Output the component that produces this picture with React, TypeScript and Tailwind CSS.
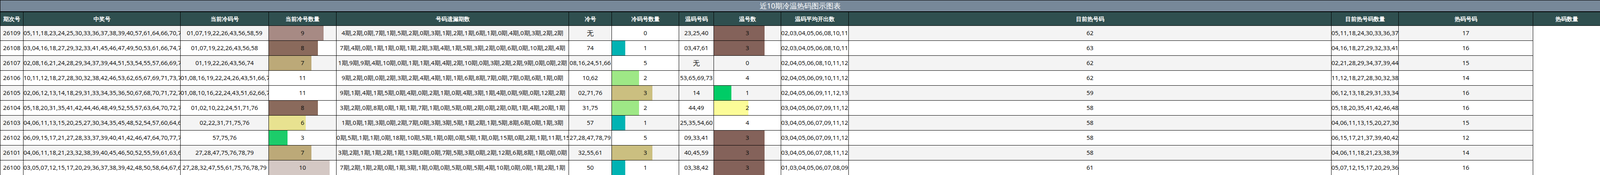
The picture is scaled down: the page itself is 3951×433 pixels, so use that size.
import React from "react";

type Bar = { w: number; c: string } | null;

const cols = [
  { t: "期次号", w: 57 },
  { t: "中奖号", w: 388 },
  { t: "当前冷码号", w: 218 },
  { t: "当前冷号数量", w: 167 },
  { t: "号码遗漏期数", w: 574 },
  { t: "冷号", w: 106 },
  { t: "冷码号数量", w: 166 },
  { t: "温码号码", w: 86 },
  { t: "温号数", w: 166 },
  { t: "温码平均开出数", w: 167 },
  { t: "目前热号码", w: 1192 },
  { t: "目前热号码数量", w: 166 },
  { t: "热码号码", w: 332 },
  { t: "热码数量", w: 166 },
];

const rows = [
  ["26109", "05,11,18,23,24,25,30,33,36,37,38,39,40,57,61,64,66,70,71,76", "01,07,19,22,26,43,56,58,59", "9", "4期,2期,0期,7期,1期,5期,2期,0期,3期,1期,2期,1期,6期,1期,0期,4期,0期,3期,2期,2期", "无", "0", "23,25,40", "3", "02,03,04,05,06,08,10,11,12,13,14,16,18,21,23,24,25,27,28,29,30,31,32,33,34,35,36,37,38,39,40,41,42,44,45,46,47,49,50,51,53,54,55,57,61,62,64,65,66,67,68,69,70,71,72,73,74,75,76,77,79,80", "62", "05,11,18,24,30,33,36,37,38,39,57,61,64,66,70,71,76", "17"],
  ["26108", "03,04,16,18,27,29,32,33,41,45,46,47,49,50,53,61,66,74,77,80", "01,07,19,22,26,43,56,58", "8", "7期,4期,0期,1期,1期,0期,1期,2期,3期,4期,1期,5期,3期,2期,0期,6期,0期,10期,2期,4期", "74", "1", "03,47,61", "3", "02,03,04,05,06,08,10,11,12,13,14,16,18,20,21,24,27,28,29,30,31,32,33,34,35,36,37,38,39,41,42,44,45,46,47,48,49,50,51,52,53,54,55,57,61,62,63,64,65,66,67,68,69,70,71,72,73,74,75,76,77,79,80", "63", "04,16,18,27,29,32,33,41,45,46,49,50,53,66,77,80", "16"],
  ["26107", "02,08,16,21,24,28,29,34,37,39,44,51,53,54,55,57,66,69,75,79", "01,19,22,26,43,56,74", "7", "1期,9期,9期,4期,10期,0期,1期,1期,4期,4期,2期,10期,0期,3期,2期,2期,9期,0期,0期,2期", "08,16,24,51,66", "5", "无", "0", "02,04,05,06,08,10,11,12,13,14,15,16,18,20,21,24,25,27,28,29,30,31,32,33,34,35,36,37,38,39,41,42,44,45,46,48,49,50,51,52,53,54,55,57,60,62,63,64,65,66,67,68,69,70,71,72,73,75,76,77,79,80", "62", "02,21,28,29,34,37,39,44,53,54,55,57,69,75,79", "15"],
  ["26106", "10,11,12,18,27,28,30,32,38,42,46,53,62,65,67,69,71,73,75,76", "01,08,16,19,22,24,26,43,51,66,74", "11", "9期,2期,0期,0期,2期,3期,2期,4期,4期,1期,1期,6期,8期,7期,0期,7期,0期,6期,1期,0期", "10,62", "2", "53,65,69,73", "4", "02,04,05,06,09,10,11,12,13,14,15,17,18,20,21,25,27,28,29,30,31,32,33,34,35,36,37,38,39,40,41,42,44,45,46,47,48,49,50,52,53,54,55,57,60,62,63,64,65,67,68,69,70,71,72,73,75,76,77,78,79,80", "62", "11,12,18,27,28,30,32,38,42,46,67,71,75,76", "14"],
  ["26105", "02,06,12,13,14,18,29,31,33,34,35,36,50,67,68,70,71,72,76,77", "01,08,10,16,22,24,43,51,62,66,74", "11", "9期,1期,4期,1期,5期,0期,4期,0期,2期,1期,0期,4期,3期,1期,4期,0期,9期,0期,12期,2期", "02,71,76", "3", "14", "1", "02,04,05,06,09,11,12,13,14,15,17,18,20,21,23,25,27,28,29,30,31,32,33,34,35,36,37,38,39,40,41,42,44,45,46,47,48,49,50,52,54,55,57,59,60,61,63,64,67,68,70,71,72,75,76,77,78,79,80", "59", "06,12,13,18,29,31,33,34,35,36,50,67,68,70,72,77", "16"],
  ["26104", "05,18,20,31,35,41,42,44,46,48,49,52,55,57,63,64,70,72,75,79", "01,02,10,22,24,51,71,76", "8", "3期,2期,0期,8期,0期,1期,1期,7期,1期,0期,5期,0期,2期,0期,2期,0期,1期,4期,20期,1期", "31,75", "2", "44,49", "2", "03,04,05,06,07,09,11,12,13,15,17,18,20,21,23,25,27,28,29,30,31,32,33,34,35,36,37,38,39,40,41,42,44,45,46,47,48,49,50,52,54,55,57,58,59,60,61,63,64,67,68,70,72,75,77,78,79,80", "58", "05,18,20,35,41,42,46,48,52,55,57,63,64,70,72,79", "16"],
  ["26103", "04,06,11,13,15,20,25,27,30,34,35,45,48,52,54,57,60,64,67,80", "02,22,31,71,75,76", "6", "1期,0期,1期,3期,0期,2期,7期,0期,3期,3期,5期,1期,2期,1期,5期,8期,6期,0期,1期,3期", "57", "1", "25,35,54,60", "4", "03,04,05,06,07,09,11,12,13,14,15,17,18,20,21,23,25,27,28,29,30,32,33,34,35,36,37,38,39,40,41,42,45,46,47,48,50,52,53,54,55,56,57,58,59,60,61,63,64,67,68,70,72,73,77,78,79,80", "58", "04,06,11,13,15,20,27,30,34,45,48,52,64,67,80", "15"],
  ["26102", "06,09,15,17,21,27,28,33,37,39,40,41,42,46,47,64,70,77,78,79", "57,75,76", "3", "0期,5期,1期,1期,0期,18期,10期,5期,1期,0期,0期,5期,1期,0期,15期,0期,2期,1期,11期,15期", "27,28,47,78,79", "5", "09,33,41", "3", "03,04,05,06,07,09,11,12,13,14,15,17,18,19,20,21,23,26,27,28,29,30,32,33,34,36,37,38,39,40,41,42,45,46,47,48,49,50,52,53,55,56,58,59,61,63,64,65,67,68,69,70,72,73,77,78,79,80", "58", "06,15,17,21,37,39,40,42,46,64,70,77", "12"],
  ["26101", "04,06,11,18,21,23,32,38,39,40,45,46,50,52,55,59,61,63,64,67", "27,28,47,75,76,78,79", "7", "3期,2期,1期,1期,2期,1期,13期,0期,0期,7期,5期,3期,0期,2期,12期,6期,8期,1期,0期,0期", "32,55,61", "3", "40,45,59", "3", "03,04,05,06,07,08,11,12,13,14,15,16,17,18,19,20,21,23,26,29,30,32,34,35,36,37,38,39,40,42,43,45,46,48,49,50,52,53,54,55,56,58,59,61,62,63,64,65,66,67,68,69,70,72,73,74,77,80", "58", "04,06,11,18,21,23,38,39,46,50,52,63,64,67", "14"],
  ["26100", "03,05,07,12,15,17,20,29,36,37,38,39,42,48,50,58,64,67,68,77", "27,28,32,47,55,61,75,76,78,79", "10", "7期,2期,1期,2期,0期,1期,3期,1期,0期,0期,5期,0期,5期,4期,10期,0期,0期,1期,2期,1期", "50", "1", "03,38,42", "3", "01,03,04,05,06,07,08,09,10,11,12,13,14,15,16,17,18,19,20,21,23,24,26,29,30,33,34,35,36,37,38,39,41,42,43,44,46,48,49,50,51,52,53,54,56,58,60,62,63,64,65,66,67,68,69,70,72,73,74,77,80", "61", "05,07,12,15,17,20,29,36,37,39,48,58,64,67,68,77", "16"],
];

const coldBar: Record<string, Bar> = {
  "9": { w: 135, c: "#a78a84" },
  "8": { w: 121, c: "#8a6a5c" },
  "7": { w: 105, c: "#bca978" },
  "6": { w: 91, c: "#e8e290" },
  "3": { w: 46, c: "#1ccc6a" },
  "10": { w: 150, c: "#d4c8c4" },
  "11": { w: 167, c: "#ffffff" },
};
const coldCnt: Record<string, Bar> = {
  "1": { w: 33, c: "#00b3b3" },
  "2": { w: 67, c: "#9ee886" },
  "3": { w: 100, c: "#cbbf80" },
  "5": { w: 166, c: "#ffffff" },
  "0": { w: 166, c: "#ffffff" },
};
const warmCnt: Record<string, Bar> = {
  "3": { w: 125, c: "#84625a" },
  "1": { w: 43, c: "#00cc66" },
  "2": { w: 85, c: "#fcfc98" },
  "4": { w: 166, c: "#ffffff" },
};
const hotCnt: Record<string, Bar> = {
  "59": { w: 156, c: "#d8cdcb" },
  "58": { w: 153, c: "#d8cdcb" },
  "61": { w: 161, c: "#efeae9" },
  "62": { w: 164, c: "#f4f3f2" },
  "63": { w: 166, c: "#ffffff" },
};
const hotN: Record<string, Bar> = {
  "16": { w: 154, c: "#e0d8d6" },
  "15": { w: 145, c: "#c4b3b0" },
  "14": { w: 135, c: "#a88d87" },
  "12": { w: 115, c: "#967b66" },
  "17": { w: 166, c: "#ffffff" },
};

function barFor(ci: number, v: string): Bar {
  if (ci === 3) return coldBar[v] ?? null;
  if (ci === 6) return coldCnt[v] ?? null;
  if (ci === 8) return warmCnt[v] ?? null;
  if (ci === 11) return hotCnt[v] ?? null;
  if (ci === 13) return hotN[v] ?? null;
  return null;
}

export default function App() {
  return (
    <div className="w-[3951px] bg-white text-[#111] font-['Liberation_Serif','Noto_Sans_CJK_SC',serif]">
      <table className="w-[3951px] table-fixed border-collapse font-['Liberation_Serif','Noto_Sans_CJK_SC',serif]">
        <colgroup>
          {cols.map((c, i) => (
            <col key={i} style={{ width: c.w }} />
          ))}
        </colgroup>
        <thead>
          <tr className="h-[28px]">
            <th
              colSpan={14}
              className="border border-black border-b-2 bg-[#778899] text-center text-[18px] font-normal text-white font-['Liberation_Serif','Noto_Sans_CJK_SC',serif]"
            >
              近10期冷温热码图示图表
            </th>
          </tr>
          <tr className="h-[34px]">
            {cols.map((c, i) => (
              <th
                key={i}
                className="border border-black bg-[#2f4f4f] text-center text-[14px] font-bold text-white font-['Noto_Sans_CJK_SC',sans-serif]"
              >
                {c.t}
              </th>
            ))}
          </tr>
        </thead>
        <tbody>
          {rows.map((r, ri) => (
            <tr key={ri} className={ri % 2 === 0 ? "h-[37px] bg-[#f4f4f4]" : "h-[37px] bg-white"}>
              {r.map((v, ci) => {
                const bar = barFor(ci, v);
                const white = ci === 9;
                return (
                  <td
                    key={ci}
                    className={
                      "relative overflow-hidden border border-black p-0 text-center text-[15px] whitespace-nowrap font-['Liberation_Serif','Noto_Sans_CJK_SC',serif] " +
                      (white ? "bg-white" : "")
                    }
                  >
                    {bar && (
                      <div
                        className="absolute top-0 bottom-0 left-0"
                        style={{ width: bar.w, background: bar.c }}
                      />
                    )}
                    <span
                      className={
                        "relative " +
                        (v === "无" ? "text-[17px] font-['Noto_Sans_CJK_SC',sans-serif]" : "")
                      }
                    >
                      {v}
                    </span>
                  </td>
                );
              })}
            </tr>
          ))}
        </tbody>
      </table>
    </div>
  );
}
